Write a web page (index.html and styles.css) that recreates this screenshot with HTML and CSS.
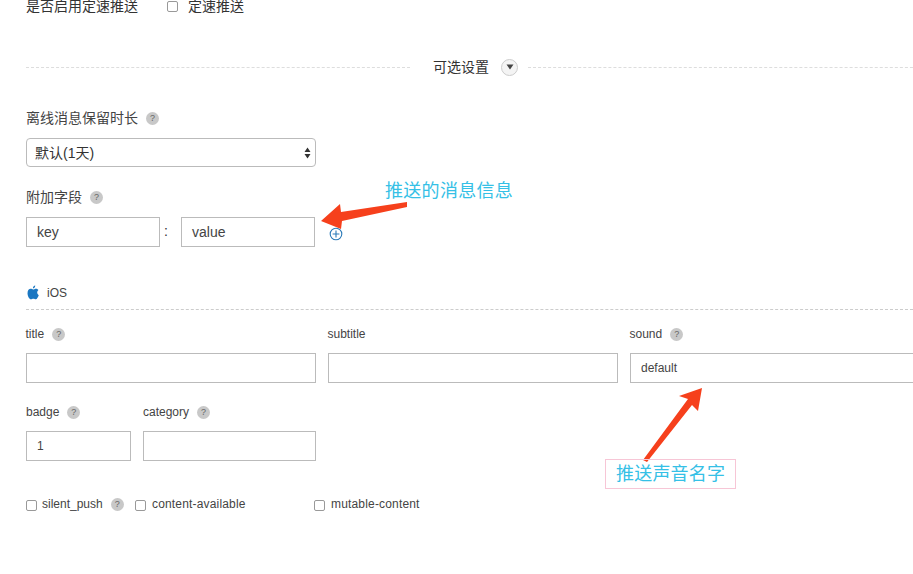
FILE: index.html
```html
<!DOCTYPE html>
<html lang="zh">
<head>
<meta charset="utf-8">
<title>可选设置</title>
<link rel="stylesheet" href="styles.css">
</head>
<body>
<div class="page">
  <div class="speed-row">
    <span class="speed-label">是否启用定速推送</span>
    <label class="speed-check"><span class="box"></span>定速推送</label>
  </div>

  <div class="divider">
    <span class="dash"></span>
    <span class="divider-text">可选设置</span>
    <span class="toggle"><svg width="8" height="6" viewBox="0 0 8 6"><path d="M0.5 0.5H7.5L4 5.5Z" fill="#444"/></svg></span>
    <span class="dash last"></span>
  </div>

  <div class="label zh first-label">离线消息保留时长<span class="help">?</span></div>
  <div class="select">
    <span>默认(1天)</span>
    <svg class="updown" width="7" height="12" viewBox="0 0 7 12"><path d="M3.5 0.5L6.5 5H0.5Z M0.5 7H6.5L3.5 11.5Z" fill="#333"/></svg>
  </div>

  <div class="label zh extra-label">附加字段<span class="help">?</span></div>
  <div class="kv-row">
    <div class="input kv">key</div>
    <span class="colon">:</span>
    <div class="input kv">value</div>
    <svg class="plus" width="14" height="14" viewBox="0 0 14 14"><circle cx="7" cy="7" r="5.8" fill="none" stroke="#2a7ab8" stroke-width="1.1"/><path d="M7 3.6V10.4M3.6 7H10.4" stroke="#2a7ab8" stroke-width="1.1"/></svg>
  </div>

  <div class="ios-head">
    <svg width="12" height="15" viewBox="0 0 14 16" preserveAspectRatio="none"><path d="M9.6 0.4C9.7 1.8 8.5 3.5 6.9 3.5 6.7 2.1 8 0.6 9.6 0.4ZM13.3 5.4C11.2 6.8 11.5 9.8 13.7 10.9 13.1 12.6 11.7 15.2 10.2 15.2 9.2 15.2 8.6 14.6 7.4 14.6 6.2 14.6 5.6 15.2 4.6 15.2 2.9 15.2 0.6 11.8 0.6 8.7 0.6 5.7 2.5 4.1 4.3 4.1 5.4 4.1 6.4 4.8 7.2 4.8 8 4.8 9 4 10.4 4 11.5 4 12.6 4.5 13.3 5.4Z" fill="#1a77c2"/></svg>
    <span>iOS</span>
  </div>

  <div class="fields-top">
    <div class="field">
      <div class="label small">title<span class="help">?</span></div>
      <div class="input tall"></div>
    </div>
    <div class="field">
      <div class="label small">subtitle</div>
      <div class="input tall"></div>
    </div>
    <div class="field">
      <div class="label small">sound<span class="help">?</span></div>
      <div class="input tall value">default</div>
    </div>
  </div>

  <div class="fields-second">
    <div class="field badge">
      <div class="label small">badge<span class="help">?</span></div>
      <div class="input tall value">1</div>
    </div>
    <div class="field category">
      <div class="label small">category<span class="help">?</span></div>
      <div class="input tall"></div>
    </div>
  </div>

  <div class="checks">
    <label class="check c1"><span class="box"></span>silent_push<span class="help">?</span></label>
    <label class="check c2"><span class="box"></span>content-available</label>
    <label class="check c3"><span class="box"></span>mutable-content</label>
  </div>

  <svg class="arrow arrow-a" width="90" height="32" viewBox="0 0 90 32"><path d="M1 20L20 3 21 11 87 1 87 6 22 20 21 28Z" fill="#f6401c"/></svg>
  <div class="note note-a">推送的消息信息</div>
  <svg class="arrow arrow-b" width="62" height="80" viewBox="0 0 62 80"><path d="M60 1L56 24 50 18 5 75 1 73 46 12 37 9Z" fill="#f6401c"/></svg>
  <div class="note note-b">推送声音名字</div>
</div>
</body>
</html>
```
FILE: styles.css
```css
* { box-sizing: border-box; }
html, body { margin: 0; padding: 0; background: #fff; }
.page {
  position: relative;
  width: 913px;
  height: 574px;
  overflow: hidden;
  padding-left: 26px;
  font-family: "Liberation Sans", "Noto Sans CJK SC", sans-serif;
  font-size: 14px;
  color: #333;
}
.speed-row { display: flex; align-items: center; height: 12px; line-height: 12px; }
.speed-label { width: 141px; }
.speed-check { display: flex; align-items: center; }
.box {
  display: inline-block;
  width: 11px;
  height: 11px;
  border: 1px solid #999;
  border-radius: 2px;
  background: #fff;
  flex: none;
}
.speed-check .box { margin-right: 10px; }

.divider { display: flex; align-items: center; height: 20px; margin-top: 45px; }
.dash { flex: none; width: 384px; border-top: 1px dashed #ddd; }
.dash.last { width: 400px; margin-left: 10px; }
.divider-text { flex: none; margin-left: 23px; width: 68px; padding-bottom: 2px; color: #333; font-size: 14px; }
.toggle {
  flex: none;
  width: 17px;
  height: 17px;
  border: 1px solid #ccc;
  border-radius: 50%;
  display: flex;
  align-items: center;
  justify-content: center;
  background: #f4f4f4;
}

.label { display: flex; align-items: center; color: #444; }
.label.zh { height: 20px; font-size: 14px; }
.label.zh .help { margin-top: 2px; }
.label.small { height: 16px; font-size: 12px; margin-bottom: 11px; }
.first-label { margin-top: 30px; }
.help {
  display: inline-flex;
  align-items: center;
  justify-content: center;
  width: 13px;
  height: 13px;
  margin-left: 8px;
  border-radius: 50%;
  background: #c8c8c8;
  color: #666;
  font-size: 9px;
  line-height: 13px;
  flex: none;
}
.select {
  display: flex;
  align-items: center;
  justify-content: space-between;
  width: 290px;
  height: 29px;
  margin-top: 11px;
  padding: 0 4px 2px 8px;
  border: 1px solid #bbb;
  border-radius: 4px;
  color: #333;
}
.updown { margin-top: 2px; }
.extra-label { margin-top: 19px; }
.kv-row { display: flex; align-items: center; margin-top: 11px; }
.input { border: 1px solid #bbb; background: #fff; display: flex; align-items: center; }
.kv { width: 134px; height: 30px; padding-left: 10px; color: #444; }
.colon { width: 21px; padding-left: 4px; height: 30px; line-height: 28px; }
.plus { margin-left: 14px; margin-top: 3px; }

.ios-head {
  display: flex;
  align-items: center;
  width: 887px;
  height: 31px;
  margin-top: 32px;
  padding-left: 1px;
  padding-bottom: 3px;
  border-bottom: 1px dashed #ccc;
  font-size: 12px;
  color: #444;
}
.ios-head span { margin-left: 8px; }

.fields-top { display: flex; gap: 12px; margin-top: 16px; }
.fields-top .field { width: 290px; flex: none; }
.fields-top .label { margin-left: -0.5px; }
.tall { height: 30px; }
.value { padding-left: 10px; font-size: 12px; color: #444; }
.fields-second { display: flex; gap: 12px; margin-top: 21px; }
.badge { width: 105px; }
.category { width: 173px; }

.checks { display: flex; align-items: center; margin-top: 36px; font-size: 12px; color: #444; }
.check { display: flex; align-items: center; }
.check .box { margin-right: 5px; margin-top: 3px; }
.c1 { width: 109px; }
.c2 { width: 179px; }
.c2 .box, .c3 .box { margin-right: 6px; }
.c2, .c3 { letter-spacing: 0.17px; }

.arrow { position: absolute; }
.arrow-a { left: 320px; top: 201px; }
.arrow-b { left: 642px; top: 387px; }
.note { position: absolute; color: #35c0e6; font-size: 18px; line-height: 22px; white-space: nowrap; }
.note-a { left: 385px; top: 180px; letter-spacing: 0.3px; }
.note-b {
  left: 605px;
  top: 459px;
  width: 131px;
  height: 30px;
  padding: 3px 0 0 10px;
  border: 1px solid #f7c6d6;
  letter-spacing: 0.2px;
}
```
